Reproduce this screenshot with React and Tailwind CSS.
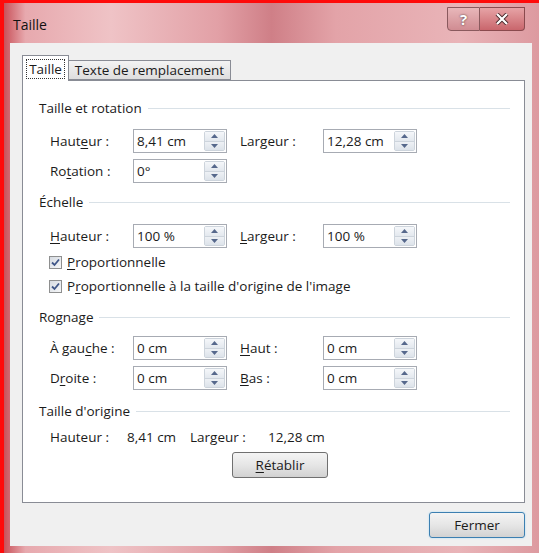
import React from 'react';

// underlined access key letter
const K = ({ children }) => <span className="underline underline-offset-[2px]">{children}</span>;

const Arrow = ({ up }) => (
  <svg width="7" height="4" viewBox="0 0 7 4">
    <path d={up ? 'M0 4 L3.5 0 L7 4 Z' : 'M0 0 L7 0 L3.5 4 Z'} fill="#56688c" />
  </svg>
);

const SpinInput = ({ value }) => (
  <div className="flex h-[24px] w-[94px] border border-[#a7abb3] bg-white">
    <span className="flex flex-1 items-center pl-[3px]">{value}</span>
    <div className="my-px mr-px flex w-[21px] flex-col rounded-[2px] border border-[#cdd4dc]">
      <div className="flex flex-1 items-center justify-center border-b border-[#cdd4dc] bg-gradient-to-b from-[#f5f7fa] to-[#e3e8ee]">
        <Arrow up />
      </div>
      <div className="flex flex-1 items-center justify-center bg-gradient-to-b from-[#eef1f5] to-[#dde3ea]">
        <Arrow />
      </div>
    </div>
  </div>
);

const Section = ({ className = '', title }) => (
  <div className={`flex h-[18px] items-center pl-[16px] pr-[14px] ${className}`}>
    <span>{title}</span>
    <div className="ml-[6px] h-px flex-1 bg-[#d9e1e7]" />
  </div>
);

const FieldRow = ({ className, label, value, label2, value2 }) => (
  <div className={`flex h-[24px] items-center pl-[27px] ${className}`}>
    <span className="w-[83px]">{label}</span>
    <SpinInput value={value} />
    {label2 && (
      <>
        <span className="ml-[13px] w-[83px]">{label2}</span>
        <SpinInput value={value2} />
      </>
    )}
  </div>
);

const Check = ({ className, children }) => (
  <div className={`flex h-[20px] items-center pl-[26px] ${className}`}>
    <div className="flex h-[13px] w-[13px] items-center justify-center border border-[#8e8f8f] bg-gradient-to-br from-[#d6dbe2] to-[#f6f7f8]">
      <svg width="9" height="9" viewBox="0 0 9 9">
        <path d="M1 4.5 L3.5 7 L8 1.5" fill="none" stroke="#3f5688" strokeWidth="1.8" />
      </svg>
    </div>
    <span className="ml-[5px]">{children}</span>
  </div>
);

const Button = ({ className, children }) => (
  <div
    className={`flex h-[26px] w-[96px] items-center justify-center rounded-[3px] border bg-gradient-to-b from-[#f4f4f4] via-[#e6e6e6] to-[#d2d2d2] ${className}`}
  >
    {children}
  </div>
);

export default function App() {
  return (
    <div className="relative flex h-[553px] w-[539px] flex-col border-l-[4px] border-t-[3px] border-[#ff0a0a] bg-[linear-gradient(90deg,#c9525a,#e7a9ae_4%,#efc3c6_20%,#e2a0a6_40%,#cf7f87_50%,#e3a3a8_62%,#e9b4b8_85%,#dd9aa0)] font-['Open_Sans',sans-serif] text-[13.5px] text-[#1b1b1b]">
      {/* title bar */}
      <div className="flex h-[40px] items-center pl-[9px] pt-[2px] text-[14px] text-[#111]">Taille</div>

      <div className="absolute right-[14px] top-[4px] flex h-[24px]">
        <div className="flex w-[33px] items-center justify-center rounded-bl-[4px] border border-[#8a5a5e] bg-gradient-to-b from-[#e8b7ba] to-[#d08c92] text-[15px] font-bold text-white [text-shadow:0_0_2px_#3a2a2c]">
          ?
        </div>
        <div className="flex w-[45px] items-center justify-center rounded-br-[4px] border border-l-0 border-[#8a4a4e] bg-gradient-to-b from-[#e6a3a6] to-[#c9666d]">
          <svg width="14" height="12" viewBox="0 0 14 12">
            <path d="M2 1 L12 11 M12 1 L2 11" stroke="#4a2a2c" strokeWidth="4" />
            <path d="M2 1 L12 11 M12 1 L2 11" stroke="#fff" strokeWidth="2.2" />
          </svg>
        </div>
      </div>

      {/* dialog body */}
      <div className="ml-[6px] mr-[7px] flex flex-col bg-[#f0f0f0] pb-[8px] pl-[12px] pr-[7px] pt-[12px]">
        {/* tabs */}
        <div className="flex h-[25px] items-end">
          <div className="relative z-10 -mb-px flex h-[26px] w-[47px] items-center justify-center border border-b-0 border-[#898c95] bg-white">
            <span className="border border-dotted border-[#333] px-[2px] leading-[18px]">Taille</span>
          </div>
          <div className="flex h-[20px] w-[162px] items-center justify-center border border-l-0 border-[#898c95] bg-gradient-to-b from-[#f3f3f3] to-[#dedede]">
            Texte de remplacement
          </div>
        </div>

        {/* tab panel */}
        <div className="flex flex-col border border-[#898c95] bg-white pb-[24px] pt-[18px]">
          <Section title="Taille et rotation" />
          <FieldRow
            className="mt-[12px]"
            label={<>Haut<K>e</K>ur :</>}
            value="8,41 cm"
            label2={<>Lar<K>g</K>eur :</>}
            value2="12,28 cm"
          />
          <FieldRow className="mt-[6px]" label={<>Ro<K>t</K>ation :</>} value="0°" />

          <Section className="mt-[10px]" title="Échelle" />
          <FieldRow
            className="mt-[13px]"
            label={<><K>H</K>auteur :</>}
            value="100 %"
            label2={<><K>L</K>argeur :</>}
            value2="100 %"
          />
          <Check className="mt-[4px]"><K>P</K>roportionnelle</Check>
          <Check className="mt-[4px]">P<K>r</K>oportionnelle à la taille d'origine de l'image</Check>

          <Section className="mt-[12px]" title="Rognage" />
          <FieldRow
            className="mt-[10px]"
            label={<>À gau<K>c</K>he :</>}
            value="0 cm"
            label2={<><K>H</K>aut :</>}
            value2="0 cm"
          />
          <FieldRow
            className="mt-[6px]"
            label={<>D<K>r</K>oite :</>}
            value="0 cm"
            label2={<><K>B</K>as :</>}
            value2="0 cm"
          />

          <Section className="mt-[12px]" title="Taille d'origine" />
          <div className="mt-[9px] flex h-[16px] items-center pl-[27px]">
            <span className="w-[77px]">Hauteur :</span>
            <span className="w-[63px]">8,41 cm</span>
            <span className="w-[78px]">Largeur :</span>
            <span>12,28 cm</span>
          </div>
          <Button className="ml-[209px] mt-[7px] border-[#707070]">
            <K>R</K>établir
          </Button>
        </div>

        {/* footer */}
        <div className="mt-[9px] flex justify-end">
          <Button className="border-[#3c7fb1] shadow-[0_0_2px_#9fd7f5]">Fermer</Button>
        </div>
      </div>
    </div>
  );
}
